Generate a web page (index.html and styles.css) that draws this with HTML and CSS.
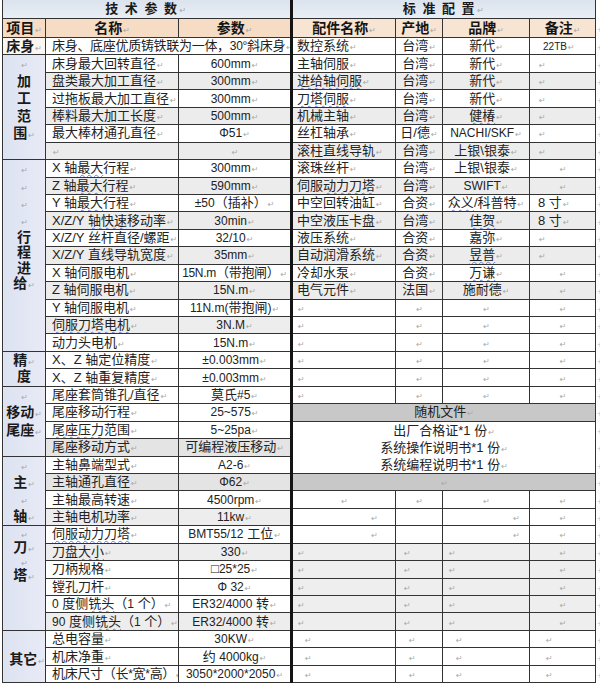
FILE: index.html
```html
<!DOCTYPE html>
<html lang="zh-CN">
<head>
<meta charset="utf-8">
<title>技术参数 · 标准配置</title>
<link rel="stylesheet" href="styles.css">
</head>
<body>
<table class="spec">
<colgroup>
<col class="c-item"><col class="c-name"><col class="c-val"><col class="c-part"><col class="c-orig"><col class="c-brand"><col class="c-note"><col class="c-eor">
</colgroup>
<tr class="h1"><td colspan="3" class="c ttl">技 术 参 数</td><td colspan="4" class="c ttl">标 准 配 置</td><td class="eor blank"></td></tr>
<tr class="h2"><td class="c hd">项目</td><td class="c hd">名称</td><td class="c hd">参数</td><td class="c hd hr">配件名称</td><td class="c hd hr">产地</td><td class="c hd hr">品牌</td><td class="c hd hr">备注</td><td class="eor"></td></tr>

<tr><td class="grp c b1">床身</td><td colspan="2" class="n tight">床身、底座优质铸铁联为一体，<span class="e">30°</span>斜床身</td><td class="p">数控系统</td><td class="c">台湾</td><td class="c">新代</td><td class="note n22"><span class="sm">22TB</span></td><td class="eor"></td></tr>

<tr><td rowspan="6" class="grp c top nm l17"><span class="m"></span><br>加<br>工<br>范<br>围<span class="m"></span></td><td class="n">床身最大回转直径</td><td class="c"><span class="e">600mm</span></td><td class="p">主轴伺服</td><td class="c">台湾</td><td class="c">新代</td><td class="note"></td><td class="eor"></td></tr>
<tr class="g"><td class="n">盘类最大加工直径</td><td class="c"><span class="e">300mm</span></td><td class="p"><span class="sp">进给轴伺服</span></td><td class="c">台湾</td><td class="c">新代</td><td class="note"></td><td class="eor"></td></tr>
<tr><td class="n">过拖板最大加工直径</td><td class="c"><span class="e">300mm</span></td><td class="p"><span class="sp">刀塔伺服</span></td><td class="c">台湾</td><td class="c">新代</td><td class="note"></td><td class="eor"></td></tr>
<tr class="g"><td class="n">棒料最大加工长度</td><td class="c"><span class="e">500mm</span></td><td class="p">机械主轴</td><td class="c">台湾</td><td class="c"><span class="sp">健椿</span></td><td class="note"></td><td class="eor"></td></tr>
<tr><td class="n">最大棒材通孔直径</td><td class="c"><span class="e">Φ51</span></td><td class="p">丝杠轴承</td><td class="c">日/德</td><td class="c"><span class="e">NACHI/SKF</span></td><td class="note"></td><td class="eor"></td></tr>
<tr class="g"><td class="n"></td><td class="c"></td><td class="p">滚柱直线导轨</td><td class="c">台湾</td><td class="c">上银\银泰</td><td class="note"></td><td class="eor"></td></tr>

<tr><td rowspan="11" class="grp c top nm"><div class="l17"><span class="m"></span><br><span class="m"></span><br><span class="m"></span><br><span class="m"></span></div><div class="l15">行<br>程<br>进<br>给<span class="m"></span></div></td><td class="n">X 轴<span class="sp">最大</span>行程</td><td class="c"><span class="e">300mm</span></td><td class="p">滚珠丝杆</td><td class="c">台湾</td><td class="c">上银\银泰</td><td class="c"></td><td class="eor"></td></tr>
<tr class="g"><td class="n">Z 轴<span class="sp">最大</span>行程</td><td class="c"><span class="e">590mm</span></td><td class="p">伺服<span class="sp">动力刀塔</span></td><td class="c">台湾</td><td class="c"><span class="e">SWIFT</span></td><td class="c"></td><td class="eor"></td></tr>
<tr><td class="n">Y 轴<span class="sp">最大</span>行程</td><td class="c"><span class="e">±50</span>（插补）</td><td class="p">中空回转油缸</td><td class="c">合资</td><td class="c"><span class="sp">众义</span>/科普特</td><td class="note">8 寸</td><td class="eor"></td></tr>
<tr class="g"><td class="n">X/Z/Y <span class="sp">轴快速</span>移动率</td><td class="c"><span class="e">30min</span></td><td class="p">中空液压卡盘</td><td class="c">台湾</td><td class="c"><span class="sp">佳贺</span></td><td class="note">8 寸</td><td class="eor"></td></tr>
<tr><td class="n">X/Z/Y 丝杆直径/螺距</td><td class="c"><span class="e">32/10</span></td><td class="p">液压系统</td><td class="c">合资</td><td class="c">嘉弥</td><td class="note"></td><td class="eor"></td></tr>
<tr class="g"><td class="n">X/Z/Y 直线导轨宽度</td><td class="c"><span class="e">35mm</span></td><td class="p">自动润滑系统</td><td class="c">合资</td><td class="c"><span class="sp">昱普</span></td><td class="note"></td><td class="eor"></td></tr>
<tr><td class="n">X 轴伺服电机</td><td class="c tight"><span class="e">15N.m</span>（带抱闸）</td><td class="p">冷却水泵</td><td class="c">合资</td><td class="c"><span class="sp">万谦</span></td><td class="c"></td><td class="eor"></td></tr>
<tr class="g"><td class="n">Z 轴伺服电机</td><td class="c"><span class="e">15N.m</span></td><td class="p">电气元件</td><td class="c">法国</td><td class="c">施耐德</td><td class="c"></td><td class="eor"></td></tr>
<tr><td class="n">Y 轴伺服电机</td><td class="c"><span class="e">11N.m(</span>带抱闸<span class="e">)</span></td><td class="p"></td><td class="c"></td><td class="c"></td><td class="c"></td><td class="eor"></td></tr>
<tr><td class="n gl"><span class="sp">伺服刀塔电机</span></td><td class="c gl"><span class="e">3N.M</span></td><td class="p"></td><td class="c"></td><td class="c"></td><td class="c"></td><td class="eor"></td></tr>
<tr><td class="n">动力头电机</td><td class="c"><span class="e">15N.m</span></td><td class="p"></td><td class="c"></td><td class="c"></td><td class="c"></td><td class="eor"></td></tr>

<tr><td rowspan="2" class="grp c top nm l16">精<span class="m"></span><br>度</td><td class="n">X、Z 轴定位精度</td><td class="c"><span class="e">±0.003mm</span></td><td class="p"></td><td class="c"></td><td class="c"></td><td class="c"></td><td class="eor"></td></tr>
<tr><td class="n">X、Z 轴重复精度</td><td class="c"><span class="e">±0.003mm</span></td><td class="p"></td><td class="c"></td><td class="c"></td><td class="c"></td><td class="eor"></td></tr>

<tr><td rowspan="4" class="grp c top nm l17"><span class="m"></span><br>移动<span class="m"></span><br>尾座<span class="m"></span></td><td class="n">尾座套筒锥孔/直径</td><td class="c">莫氏<span class="e">#5</span></td><td class="p"></td><td class="c"></td><td class="c"></td><td class="c"></td><td class="eor"></td></tr>
<tr><td class="n">尾座移动行程</td><td class="c"><span class="e">25~575</span></td><td colspan="4" class="c dk">随机文件</td><td class="eor"></td></tr>
<tr><td class="n"><span class="sp">尾座压力</span>范围</td><td class="c"><span class="e">5~25pa</span></td><td colspan="4" rowspan="3" class="c nm docs">出厂合格证*1 份<span class="m"></span><br>系统操作说明书*1 份<span class="m"></span><br>系统编程说明书*1 份<span class="m"></span></td><td class="eor"></td></tr>
<tr><td class="n gm">尾座移动方式</td><td class="c gm">可编程液压移动</td><td class="eor"></td></tr>

<tr><td rowspan="4" class="grp c top nm l16b"><span class="m"></span><br>主<span class="m"></span><br><span class="m"></span><br>轴<span class="m"></span></td><td class="n">主轴鼻端型式</td><td class="c"><span class="e">A2-6</span></td><td class="eor"></td></tr>
<tr><td class="n gm">主轴通孔直径</td><td class="c gm"><span class="e">Φ62</span></td><td colspan="4" class="c dk"></td><td class="eor"></td></tr>
<tr><td class="n">主轴最高转速</td><td class="c"><span class="e">4500rpm</span></td><td class="c"></td><td class="c"></td><td class="c"></td><td class="c"></td><td class="eor"></td></tr>
<tr><td class="n gl">主轴电机功率</td><td class="c gl"><span class="e">11kw</span></td><td class="r pr17"></td><td class="nm"></td><td class="r pr9"></td><td class="c"></td><td class="eor"></td></tr>

<tr><td rowspan="6" class="grp c top nm l14"><span class="m"></span><br>刀<span class="m"></span><br><span class="m"></span><br>塔<span class="m"></span></td><td class="n"><span class="sp">伺服动力刀塔</span></td><td class="c"><span class="e">BMT55/12</span> 工位</td><td class="r pr17"></td><td class="nm"></td><td class="r pr9"></td><td class="c"></td><td class="eor"></td></tr>
<tr><td class="n gl">刀盘<span class="sp">大小</span></td><td class="c gl"><span class="e">330</span></td><td class="p gr"></td><td class="pl7 gr"></td><td class="pl5 gr"></td><td class="c gr"></td><td class="eor"></td></tr>
<tr><td class="n">刀柄规格</td><td class="c">□<span class="e">25*25</span></td><td class="p gr"></td><td class="pl7 gr"></td><td class="pl5 gr"></td><td class="c gr"></td><td class="eor"></td></tr>
<tr><td class="n">镗孔刀杆</td><td class="c"><span class="e">Φ 32</span></td><td class="p gr"></td><td class="pl7 gr"></td><td class="pl5 gr"></td><td class="c gr"></td><td class="eor"></td></tr>
<tr><td class="n"><span class="e">0</span> 度侧<span class="sp">铣头</span>（<span class="e">1</span> 个）</td><td class="c"><span class="e">ER32/4000</span> 转</td><td class="p gr"></td><td class="pl7 gr"></td><td class="pl5 gr"></td><td class="c gr"></td><td class="eor"></td></tr>
<tr><td class="n gl"><span class="e">90</span> 度侧<span class="sp">铣头</span>（<span class="e">1</span> 个）</td><td class="c gl"><span class="e">ER32/4000</span> 转</td><td class="p gr"></td><td class="pl7 gr"></td><td class="pl5 gr"></td><td class="c gr"></td><td class="eor"></td></tr>

<tr><td rowspan="3" class="grp c other">其它</td><td class="n">总电容量</td><td class="c"><span class="e">30KW</span></td><td class="pl11"></td><td class="pl12"></td><td class="pl12"></td><td class="pl15"></td><td class="eor"></td></tr>
<tr><td class="n">机床净重</td><td class="c">约 <span class="e">4000kg</span></td><td class="pl11"></td><td class="pl12"></td><td class="pl12"></td><td class="pl15"></td><td class="eor"></td></tr>
<tr><td class="n tight">机床尺寸（长<span class="e">*</span>宽<span class="e">*</span>高）</td><td class="c"><span class="e">3050*2000*2050</span></td><td class="pl11"></td><td class="pl12"></td><td class="pl12"></td><td class="pl15"></td><td class="eor"></td></tr>
</table>
</body>
</html>
```

FILE: styles.css
```css
* { box-sizing: border-box; }
html, body { margin: 0; padding: 0; background: #ffffff; }
body {
  font-family: "Liberation Sans", "Noto Sans CJK SC", sans-serif;
  font-size: 13px;
  color: #222222;
}

.spec {
  border-collapse: collapse;
  table-layout: fixed;
  width: 598px;
  margin-left: 2px;
}
.c-item { width: 43px; }
.c-name { width: 133px; }
.c-val { width: 113px; }
.c-part { width: 104px; border-left: 3px solid #141414; }
.c-orig { width: 47px; }
.c-brand { width: 87px; }
.c-note { width: 66px; }
.c-eor { width: 5px; }

.spec tr { height: 17.45px; }
.spec tr.h1 { height: 18px; }
.spec tr.h2 { height: 19.5px; }

.spec td {
  border: 1px solid #333333;
  padding: 0 3px;
  line-height: 14px;
  white-space: nowrap;
  overflow: hidden;
  text-align: left;
  vertical-align: middle;
  background: #ffffff;
}

/* Word paragraph marks */
.spec td::after,
.m::after {
  content: "\21B5";
  font-family: "DejaVu Sans", sans-serif;
  font-size: 8px;
  line-height: 0;
  font-weight: normal;
  color: #a8a8a8;
  margin-left: 1px;
}
.spec td.nm::after { content: none; }
.spec td.eor {
  border: none;
  padding: 0 0 0 1px;
  background: #ffffff;
}
.spec td.eor::after {
  content: "+";
  font-family: "DejaVu Sans", sans-serif;
  font-size: 7px;
  line-height: 0;
  color: #b8b8b8;
  margin: 0;
}
.spec td.eor.blank::after { content: none; }

.c { text-align: center; }
.spec td.c { text-align: center; }
.spec td.r { text-align: right; }
.spec td.n { padding-left: 6px; }
.spec td.p { padding-left: 4px; }
.spec td.note { padding-left: 8px; }
.spec td.n22 { padding-left: 13px; }
.spec td.pr17 { padding-right: 17px; }
.spec td.pr9 { padding-right: 9px; }
.spec td.pl5 { padding-left: 5px; }
.spec td.pl7 { padding-left: 7px; }
.spec td.pl11 { padding-left: 11px; }
.spec td.pl12 { padding-left: 12px; }
.spec td.pl15 { padding-left: 15px; }

.e { font-size: 12px; line-height: 0; }
.sm { font-size: 10px; line-height: 0; }
.tight { letter-spacing: -0.3px; }

.sp {
  text-decoration: underline wavy #6b7fd4;
  text-decoration-thickness: 1px;
  text-underline-offset: 2px;
}

/* header rows */
.spec tr.h1 td {
  border-top: none;
  background: linear-gradient(180deg, #dbe3ee 0%, #e8eef5 100%);
}
.spec tr.h1 td.eor { background: #ffffff; }
.ttl {
  font-weight: bold;
  font-size: 13px;
  letter-spacing: 1.5px;
  color: #1a1a1a;
}
.spec td.hd {
  font-weight: bold;
  font-size: 14px;
  color: #141414;
  background: #f6dcc4;
}
.spec td.hd.hr { background: #f7e4d2; }

/* 项目 group column */
.spec td.grp {
  padding: 0;
  font-weight: bold;
  font-size: 14px;
  color: #1a1a1a;
  background: linear-gradient(90deg, #dde2f1 0%, #e8ebf6 100%);
}
.spec td.grp.b1 { background: #fbf6f1; }
.spec td.grp.other { padding-top: 4px; padding-left: 6px; }
.spec td.top { vertical-align: top; }
.l17 { line-height: 17.45px; }
.spec td.l17 { line-height: 17.45px; }
.l15 { line-height: 15.5px; }
.spec td.l16 { line-height: 16.5px; }
.spec td.l16b { line-height: 17px; }
.spec td.l14 { line-height: 14px; }

/* shading */
.spec tr.g > td:not(.grp):not(.eor) { background: #ececec; }
.spec td.gl { background: #ededed; }
.spec td.gm { background: #e4e4e4; }
.spec td.gr { background: #eeeeee; }
.spec td.dk { background: #c8c8c8; }
.spec td.docs { line-height: 17px; }
```
